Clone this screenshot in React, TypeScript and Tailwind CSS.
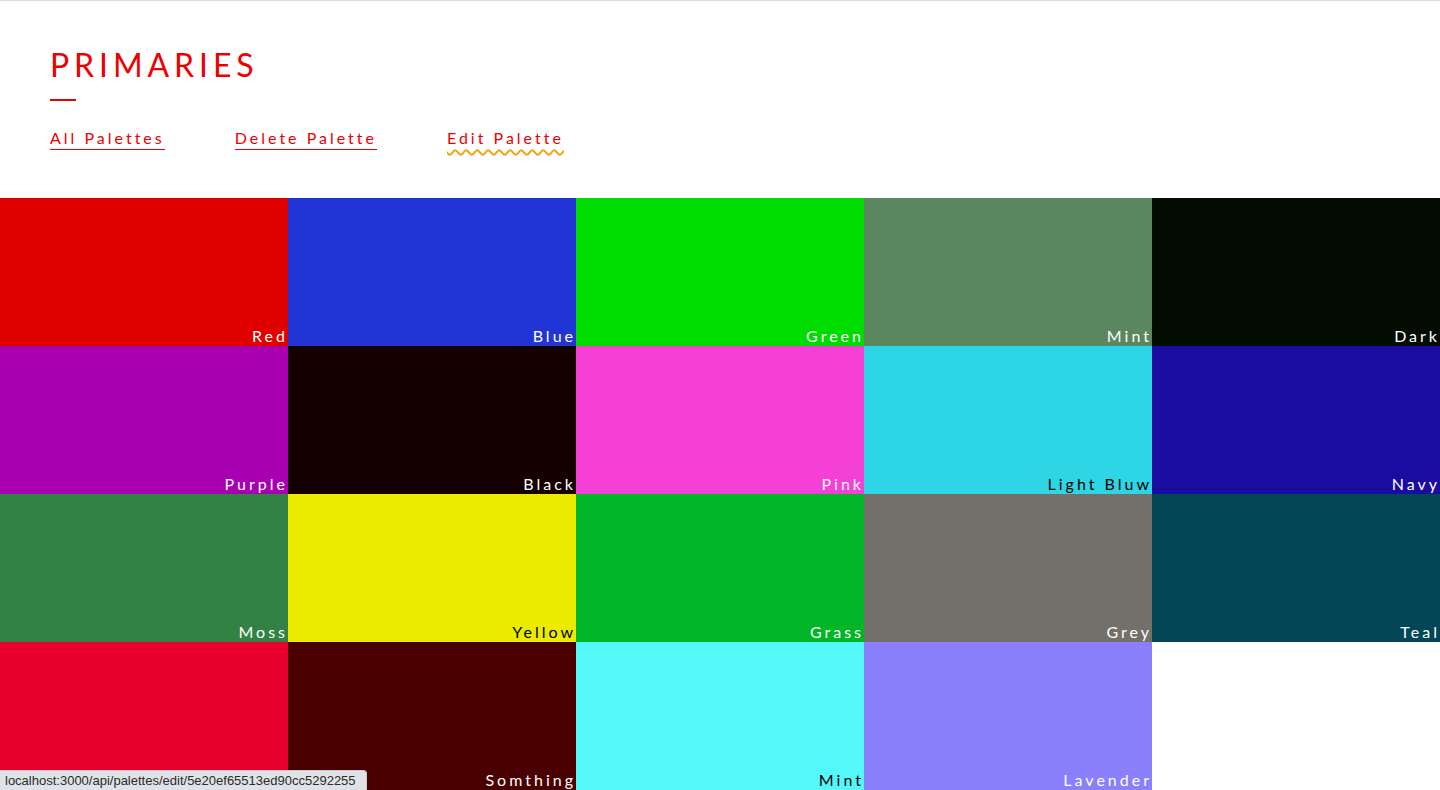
const swatches = [
  { name: 'Red', color: 'bg-[#e00000]', dark: false },
  { name: 'Blue', color: 'bg-[#2135d6]', dark: false },
  { name: 'Green', color: 'bg-[#00dc00]', dark: false },
  { name: 'Mint', color: 'bg-[#5a8660]', dark: false },
  { name: 'Dark', color: 'bg-[#020c02]', dark: false },
  { name: 'Purple', color: 'bg-[#a800b0]', dark: false },
  { name: 'Black', color: 'bg-[#140000]', dark: false },
  { name: 'Pink', color: 'bg-[#f540d6]', dark: false },
  { name: 'Light Bluw', color: 'bg-[#2dd5e5]', dark: true },
  { name: 'Navy', color: 'bg-[#1a0ca0]', dark: false },
  { name: 'Moss', color: 'bg-[#328244]', dark: false },
  { name: 'Yellow', color: 'bg-[#ebeb00]', dark: true },
  { name: 'Grass', color: 'bg-[#00b526]', dark: false },
  { name: 'Grey', color: 'bg-[#736f69]', dark: false },
  { name: 'Teal', color: 'bg-[#024657]', dark: false },
  { name: 'Red', color: 'bg-[#e8002c]', dark: false, hideLabel: true },
  { name: 'Somthing', color: 'bg-[#4a0000]', dark: false },
  { name: 'Mint', color: 'bg-[#55f8f8]', dark: true },
  { name: 'Lavender', color: 'bg-[#8a80fc]', dark: false },
];

export default function App() {
  return (
    <div className="min-h-screen bg-white font-['Lato','Noto_Sans',sans-serif]">
      <header className="h-[198px] border-t border-[#dcdcdc] pl-[50px] pt-[48px]">
        <h1 className="text-[32px] leading-none tracking-[4.9px] text-[#ee0000]">PRIMARIES</h1>
        <div className="mt-[18px] h-[2px] w-[26px] bg-[#ee0000]" />
        <nav className="mt-[29px] flex gap-[70px] text-[16px] leading-none tracking-[3px] text-[#ee0000]">
          <a href="#" className="border-b border-[#ee0000] pb-[3px]">All Palettes</a>
          <a href="#" className="border-b border-[#ee0000] pb-[3px]">Delete Palette</a>
          <a
            href="#"
            className="underline decoration-wavy decoration-[#f5a000] decoration-2 underline-offset-[5px]"
          >
            Edit Palette
          </a>
        </nav>
      </header>

      <div className="grid grid-cols-5">
        {swatches.map((s, i) => (
          <div key={i} className={`flex h-[148px] items-end justify-end ${s.color}`}>
            {!s.hideLabel && (
              <span
                className={`pb-[2px] text-[16px] leading-none tracking-[3px] ${s.dark ? 'text-black' : 'text-white'}`}
              >
                {s.name}
              </span>
            )}
          </div>
        ))}
      </div>

      {/* browser status bar */}
      <div className="fixed bottom-0 left-0 flex h-[20px] w-[367px] items-center rounded-tr-[4px] border-t border-r border-[#c8ccd0] bg-[#dfe2e6] pl-[5px] font-['Liberation_Sans',sans-serif] text-[13px] text-[#2b2b2b]">
        localhost:3000/api/palettes/edit/5e20ef65513ed90cc5292255
      </div>
    </div>
  );
}
